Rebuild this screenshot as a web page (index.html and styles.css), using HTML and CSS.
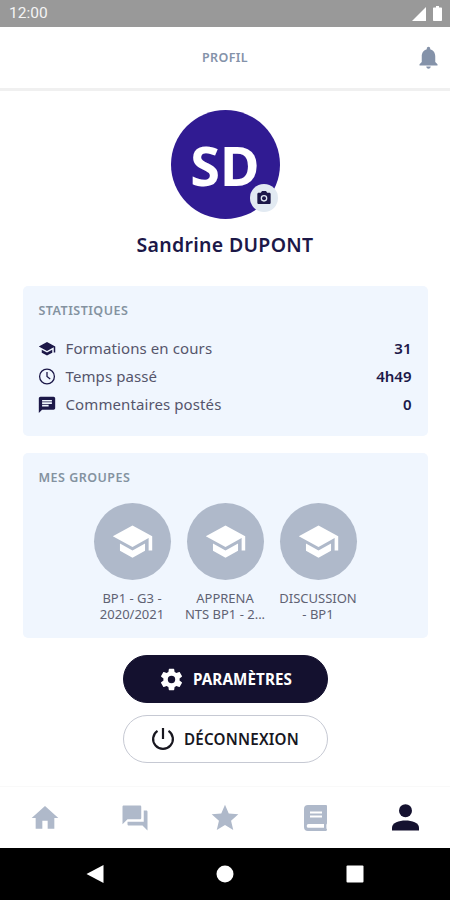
FILE: index.html
```html
<!DOCTYPE html>
<html lang="fr">
<head>
    <meta charset="UTF-8">
    <meta name="viewport" content="width=device-width, initial-scale=1.0">
    <title>Profil</title>
    <link rel="stylesheet" href="styles.css">
</head>
<body>
    <!-- Shared icons -->
    <svg class="sprite" aria-hidden="true">
        <symbol id="school" viewBox="0 0 24 24">
            <path d="M5 13.18v4L12 21l7-3.82v-4L12 17l-7-3.82zM12 3L1 9l11 6 9-4.91V17h2V9L12 3z"/>
        </symbol>
    </svg>

    <div class="app">
        <div class="status-bar">
            <span>12:00</span>
            <div class="status-icons">
                <svg width="14" height="14" viewBox="0 0 14 14"><path d="M14 0v14H0z"/></svg>
                <svg width="9" height="15" viewBox="0 0 9 15"><path d="M3 0h3v1.5h2c.6 0 1 .4 1 1V14c0 .6-.4 1-1 1H1c-.6 0-1-.4-1-1V2.500c0-.6.4-1 1-1h2z"/></svg>
            </div>
        </div>

        <header class="header">
            <h1>PROFIL</h1>
            <svg class="bell" viewBox="0 0 24 24"><path d="M12 22c1.100 0 2-.9 2-2h-4c0 1.100.89 2 2 2zm6-6v-5c0-3.070-1.640-5.640-4.500-6.320V4c0-.83-.67-1.500-1.500-1.500s-1.500.67-1.500 1.500v.68C7.630 5.360 6 7.920 6 11v5l-2 2v1h16v-1l-2-2z"/></svg>
        </header>

        <main>
            <div class="avatar">
                <span>SD</span>
                <button class="avatar-edit" aria-label="Photo">
                    <svg width="16" height="16" viewBox="0 0 24 24"><path fill-rule="evenodd" d="M9 1.500L7.200 4H4c-1.100 0-2 .9-2 2v13c0 1.100.9 2 2 2h16c1.100 0 2-.9 2-2V6c0-1.100-.9-2-2-2h-3.200L15 1.500H9zm3 6a5 5 0 1 1 0 10 5 5 0 0 1 0-10z"/><circle cx="12" cy="12.500" r="3"/></svg>
                </button>
            </div>
            <h2 class="name">Sandrine DUPONT</h2>

            <section class="card stats">
                <h3>STATISTIQUES</h3>
                <ul>
                    <li>
                        <svg width="18" height="18" viewBox="0 -1 24 24"><use href="#school" width="24" height="24"/></svg>
                        <span>Formations en cours</span>
                        <strong>31</strong>
                    </li>
                    <li>
                        <svg width="18" height="18" viewBox="0 -0.500 18 18"><g class="line"><circle cx="9" cy="9" r="7.400"/><path d="M9 4.500V9l3.200 2.500"/></g></svg>
                        <span>Temps passé</span>
                        <strong>4h49</strong>
                    </li>
                    <li>
                        <svg width="18" height="18" viewBox="1 0 22 22"><path fill-rule="evenodd" d="M20 2H4c-1.100 0-2 .9-2 2v18l4-4h14c1.100 0 2-.9 2-2V4c0-1.100-.9-2-2-2zM6 6h12v2H6zm0 3h12v2H6zm0 3h8v2H6z"/></svg>
                        <span>Commentaires postés</span>
                        <strong>0</strong>
                    </li>
                </ul>
            </section>

            <section class="card groups">
                <h3>MES GROUPES</h3>
                <div class="group-list">
                    <div class="group">
                        <div class="group-icon"><svg width="43" height="43"><use href="#school"/></svg></div>
                        <p>BP1 - G3 -<br>2020/2021</p>
                    </div>
                    <div class="group">
                        <div class="group-icon"><svg width="43" height="43"><use href="#school"/></svg></div>
                        <p>APPRENA<br>NTS BP1 - 2...</p>
                    </div>
                    <div class="group">
                        <div class="group-icon"><svg width="43" height="43"><use href="#school"/></svg></div>
                        <p>DISCUSSION<br>- BP1</p>
                    </div>
                </div>
            </section>

            <div class="actions">
                <button class="btn btn-primary">
                    <svg width="27" height="27" viewBox="0 0 24 24"><path d="M19.140 12.940c.04-.3.06-.61.06-.94s-.02-.64-.07-.94l2.030-1.580c.18-.14.23-.41.12-.61l-1.920-3.320c-.12-.22-.37-.29-.59-.22l-2.390.96c-.5-.38-1.030-.7-1.620-.94l-.36-2.540c-.04-.24-.24-.41-.48-.41h-3.840c-.24 0-.43.17-.47.41l-.36 2.540c-.59.24-1.130.57-1.620.94l-2.390-.96c-.22-.08-.47 0-.59.22L2.740 8.870c-.12.21-.08.47.12.61l2.030 1.580c-.05.3-.09.63-.09.94s.02.64.07.94l-2.030 1.580c-.18.14-.23.41-.12.61l1.920 3.320c.12.22.37.29.59.22l2.390-.96c.5.38 1.030.7 1.620.94l.36 2.540c.05.24.24.41.48.41h3.840c.24 0 .44-.17.47-.41l.36-2.540c.59-.24 1.130-.56 1.620-.94l2.390.96c.22.08.47 0 .59-.22l1.920-3.320c.12-.22.07-.47-.12-.61l-2.010-1.580zM12 15.300a3.300 3.300 0 1 1 0-6.600 3.300 3.300 0 0 1 0 6.600z"/></svg>
                    PARAMÈTRES
                </button>
                <button class="btn btn-outline">
                    <svg width="24" height="24" viewBox="0 0.500 24 24"><path class="power" d="M12 1.500v11M6.500 4.300a9.900 9.900 0 1 0 11 0"/></svg>
                    DÉCONNEXION
                </button>
            </div>
        </main>

        <nav class="tab-bar">
            <a><svg width="32" height="32" viewBox="0 0 24 24"><path d="M10 20v-6h4v6h5v-8h3L12 3 2 12h3v8z"/></svg></a>
            <a><svg width="30" height="30" viewBox="0 0 24 24"><path d="M21 6h-2v9H6v2c0 .55.45 1 1 1h11l4 4V7c0-.55-.45-1-1-1zm-4 6V3c0-.55-.45-1-1-1H3c-.55 0-1 .45-1 1v14l4-4h10c.55 0 1-.45 1-1z"/></svg></a>
            <a><svg width="32" height="32" viewBox="0 0 24 24"><path d="M12 17.270L18.180 21l-1.640-7.030L22 9.240l-7.190-.61L12 2 9.190 8.630 2 9.240l5.460 4.730L5.820 21z"/></svg></a>
            <a><svg width="23" height="26" viewBox="0 0 23 26"><path fill-rule="evenodd" d="M4 0h18q1 0 1 1v17q0 1-.6 1.500v4q.6.500.6 1.200T22 26H4q-4 0-4-4V4q0-4 4-4zM6 6.500v2h12v-2zm0 4v2h12v-2zM4.500 19q-1.800 0-1.800 1.900t1.800 1.900H20V19z"/></svg></a>
            <a class="active"><svg width="27" height="27" viewBox="0 0 27 27"><circle cx="13.500" cy="6.700" r="6.500"/><path d="M0 26.500v-3c0-4.500 7-7 13.500-7s13.500 2.500 13.500 7v3z"/></svg></a>
        </nav>

        <div class="system-nav">
            <svg width="18" height="18" viewBox="0 0 18 18"><path d="M17.500 0v18L0.500 9z"/></svg>
            <svg width="18" height="18" viewBox="0 0 18 18"><circle cx="9" cy="9" r="8.500"/></svg>
            <svg width="18" height="18" viewBox="0 0 18 18"><rect x="0.500" y="0.500" width="17" height="17" rx="1"/></svg>
        </div>
    </div>
</body>
</html>
```
FILE: styles.css
```css
* {
    margin: 0;
    padding: 0;
    box-sizing: border-box;
}

body {
    font-family: "Noto Sans", "Open Sans", sans-serif;
    background-color: #fff;
    color: #1c1848;
}

svg {
    display: block;
    flex-shrink: 0;
    fill: currentColor;
}

button {
    font-family: inherit;
    cursor: pointer;
}

.sprite {
    position: absolute;
    width: 0;
    height: 0;
}

.app {
    width: 450px;
    height: 900px;
    display: flex;
    flex-direction: column;
    overflow: hidden;
}

.status-bar {
    height: 27px;
    padding: 0 8px 0 9px;
    display: flex;
    align-items: center;
    justify-content: space-between;
    background-color: #999;
    color: #f4f4f4;
    font: 15.5px/29px Roboto, sans-serif;
    flex-shrink: 0;
}

.status-icons {
    display: flex;
    align-items: center;
    gap: 7px;
    color: #fff;
}

.header {
    height: 64px;
    border-bottom: 3px solid #f0f0f0;
    padding: 0 8px;
    display: grid;
    grid-template-columns: 1fr auto 1fr;
    align-items: center;
    color: #8492a9;
    flex-shrink: 0;
}

.header h1 {
    grid-column: 2;
    font-size: 12.5px;
    font-weight: 600;
    letter-spacing: 0.4px;
}

.bell {
    width: 27px;
    height: 27px;
    justify-self: end;
}

main {
    flex: 1;
    display: flex;
    flex-direction: column;
    align-items: center;
    padding-top: 19px;
}

.avatar {
    position: relative;
    width: 109px;
    height: 109px;
    border-radius: 50%;
    background-color: #301b92;
    color: #fff;
    font-size: 54px;
    font-weight: 700;
    line-height: 111px;
    text-align: center;
}

.avatar-edit {
    position: absolute;
    right: 2px;
    bottom: 7px;
    width: 28px;
    height: 28px;
    border: none;
    border-radius: 50%;
    background-color: #e2eaf2;
    color: #1c1848;
    display: flex;
    align-items: center;
    justify-content: center;
}

.name {
    margin-top: 12px;
    font-size: 19.5px;
    font-weight: 600;
    letter-spacing: 0.3px;
    line-height: 28px;
}

.card {
    width: 405px;
    padding: 16px;
    border-radius: 5px;
    background-color: #f0f6fe;
}

.card h3 {
    font-size: 12.5px;
    font-weight: 600;
    letter-spacing: 0.48px;
    line-height: 18px;
    color: #8492a0;
}

.stats {
    height: 150px;
    margin-top: 27px;
}

.stats ul {
    list-style: none;
    margin-top: 14px;
}

.stats li {
    height: 28px;
    display: flex;
    align-items: center;
    gap: 10px;
    font-size: 15px;
}

.stats li svg {
    margin-left: -1px;
}

.stats li span {
    flex: 1;
    letter-spacing: 0.1px;
    color: #55556b;
}

.stats li strong {
    font-weight: 600;
}

.line {
    fill: none;
    stroke: currentColor;
    stroke-width: 1.3;
}

.groups {
    height: 185px;
    margin-top: 17px;
}

.group-list {
    margin-top: 16px;
    display: flex;
    justify-content: center;
    gap: 12px;
}

.group {
    width: 81px;
    display: flex;
    flex-direction: column;
    align-items: center;
    gap: 10px;
}

.group-icon {
    width: 77px;
    height: 77px;
    border-radius: 50%;
    background-color: #afb9ca;
    color: #fff;
    display: flex;
    align-items: center;
    justify-content: center;
}

.group p {
    font-size: 13px;
    line-height: 16px;
    text-align: center;
    white-space: nowrap;
    color: #5f6273;
}

.actions {
    margin-top: 17px;
    display: flex;
    flex-direction: column;
    gap: 12px;
}

.btn {
    width: 205px;
    height: 48px;
    border: 1px solid #c6c9d3;
    border-radius: 24px;
    display: flex;
    align-items: center;
    justify-content: center;
    gap: 9px;
    font-size: 15.2px;
    font-weight: 700;
}

.btn-primary {
    gap: 8px;
    letter-spacing: 0.1px;
    background-color: #14112f;
    border-color: #14112f;
    color: #fff;
}

.btn-outline {
    background-color: #fff;
    color: #18171f;
    font-weight: 600;
    letter-spacing: 0.2px;
}

.power {
    fill: none;
    stroke: currentColor;
    stroke-width: 2.2;
}

.tab-bar {
    height: 62px;
    border-top: 1px solid #f9f9f9;
    display: grid;
    grid-template-columns: repeat(5, 1fr);
    align-items: center;
    justify-items: center;
    color: #afb9ca;
    flex-shrink: 0;
}

.tab-bar .active {
    color: #14112f;
}

.system-nav {
    height: 52px;
    padding: 0 86px;
    display: flex;
    align-items: center;
    justify-content: space-between;
    background-color: #000;
    color: #fff;
    flex-shrink: 0;
}
```
